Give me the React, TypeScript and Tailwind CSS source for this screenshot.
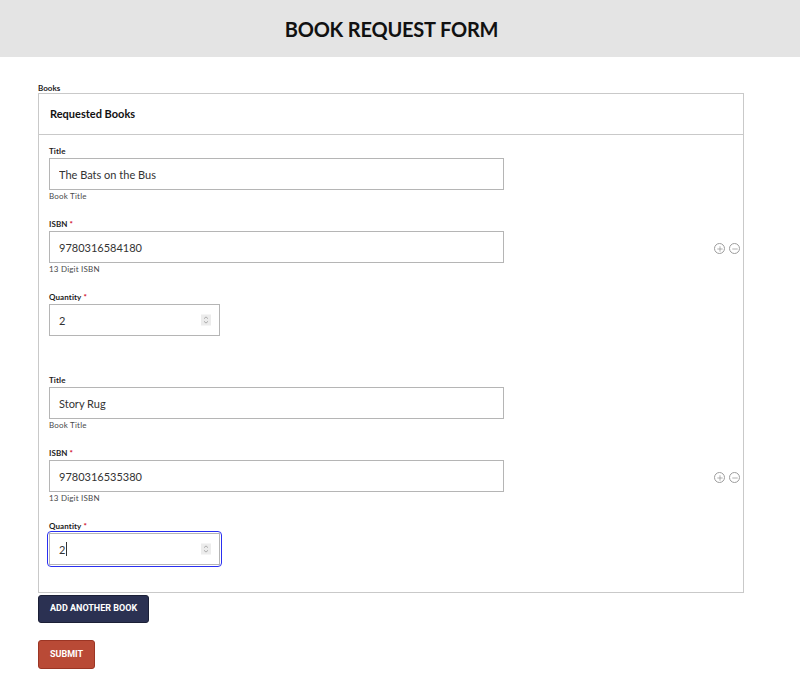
import { Plus, Minus } from "lucide-react";

interface Book {
    title: string; isbn: string; qty: string;
}

const books: Book[] = [
    { title: "The Bats on the Bus", isbn: "9780316584180", qty: "2" },
    { title: "Story Rug", isbn: "9780316535380", qty: "2" },
];

const font = { fontFamily: "Lato, 'Open Sans', sans-serif" };

function Label({ text, required }: { text: string; required?: boolean }) {
    return (
        <div className="text-[8px] leading-[12px] font-bold text-[#222] mb-px tracking-[0.1px]">
            {text}
            {required && <span className="text-[#d0021b] ml-[2px]">*</span>}
        </div>
    );
}

function Spinner() {
    return (
        <span className="absolute right-[9px] top-1/2 -translate-y-1/2 w-[10px] h-[11px] bg-[#ececec] flex flex-col items-center justify-center text-[#9a9a9a]">
            <svg width="6" height="9" viewBox="0 0 6 9" fill="none" stroke="currentColor" strokeWidth="0.8">
                <path d="M1 3.2 L3 1.4 L5 3.2" />
                <path d="M1 5.8 L3 7.6 L5 5.8" />
            </svg>
        </span>
    );
}

function CircleBtn({ kind }: { kind: "plus" | "minus" }) {
    return (
        <span className="w-[11px] h-[11px] rounded-full border border-[#9d9d9d] text-[#8c8c8c] flex items-center justify-center">
            {kind === "plus" ? <Plus size={8} strokeWidth={2} /> : <Minus size={8} strokeWidth={2} />}
        </span>
    );
}

function BookRow({ book, focused }: { book: Book; focused?: boolean }) {
    return (
        <div className="flex items-center pb-3">
            <div className="flex-1">
                {/* Title */}
                <Label text="Title" />
                <input
                    readOnly
                    value={book.title}
                    className="block w-[455px] h-8 border border-[#b5b5b5] px-[9px] text-[11px] text-[#333] outline-none"
                    style={font}
                />
                <div className="text-[8px] leading-[12px] text-[#4a4a4a] tracking-[0.2px]">Book Title</div>
                {/* ISBN */}
                <div className="mt-4">
                    <Label text="ISBN" required />
                    <input
                        readOnly
                        value={book.isbn}
                        className="block w-[455px] h-8 border border-[#b5b5b5] px-[9px] text-[11px] text-[#333] outline-none"
                        style={font}
                    />
                    <div className="text-[8px] leading-[12px] text-[#4a4a4a] tracking-[0.2px]">13 Digit ISBN</div>
                </div>
                {/* Quantity */}
                <div className="mt-4">
                    <Label text="Quantity" required />
                    <div
                        className={
                            focused
                                ? "relative w-[171px] h-8 rounded-[2px] outline outline-1 outline-offset-[1px] outline-[#2a2ff0]"
                                : "relative w-[171px] h-8"
                        }
                    >
                        <input
                            readOnly
                            value={book.qty}
                            className="block w-full h-full border border-[#b5b5b5] px-[9px] text-[11px] text-[#333] outline-none"
                            style={font}
                        />
                        {focused && <span className="absolute left-[17px] top-[9px] w-px h-[14px] bg-[#333]" />}
                        <Spinner />
                    </div>
                </div>
            </div>
            <div className="flex gap-[4px] pr-[3px] pt-[16px]">
                <CircleBtn kind="plus" />
                <CircleBtn kind="minus" />
            </div>
        </div>
    );
}

export default function App() {
    return (
        <div className="min-h-[680px] bg-white" style={font}>
            {/* Header */}
            <header className="h-[57px] bg-[#e4e4e4] flex items-center justify-center pr-[17px]">
                <h1 className="text-[20px] font-bold text-[#111] tracking-[-0.2px]">BOOK REQUEST FORM</h1>
            </header>

            <main className="pl-[38px] pr-[56px] pt-[26px]">
                <div className="text-[8px] leading-[10px] font-bold text-[#222]">Books</div>
                {/* Books panel */}
                <div className="border border-[#c9c9c9]">
                    <div className="h-[41px] border-b border-[#c9c9c9] flex items-center px-[11px]">
                        <span className="text-[11px] font-bold text-[#111]">Requested Books</span>
                    </div>
                    <div className="pl-[10px] pt-[10px] pb-[15px] flex flex-col gap-[26px]">
                        {books.map((b, i) => (
                            <BookRow key={b.isbn} book={b} focused={i === books.length - 1} />
                        ))}
                    </div>
                </div>

                {/* Buttons */}
                <button
                    className="mt-[2px] h-[28px] px-[11px] rounded-[3px] bg-[#2b3152] text-white text-[9px] font-bold border border-[#1b1f36]"
                    style={{ fontFamily: "Roboto, sans-serif" }}
                >
                    ADD ANOTHER BOOK
                </button>
                <div className="mt-[16px]">
                    <button
                        className="h-[29px] px-[11px] rounded-[3px] bg-[#b94a36] text-white text-[9px] font-bold border border-[#9c3524]"
                        style={{ fontFamily: "Roboto, sans-serif" }}
                    >
                        SUBMIT
                    </button>
                </div>
            </main>
        </div>
    );
}
